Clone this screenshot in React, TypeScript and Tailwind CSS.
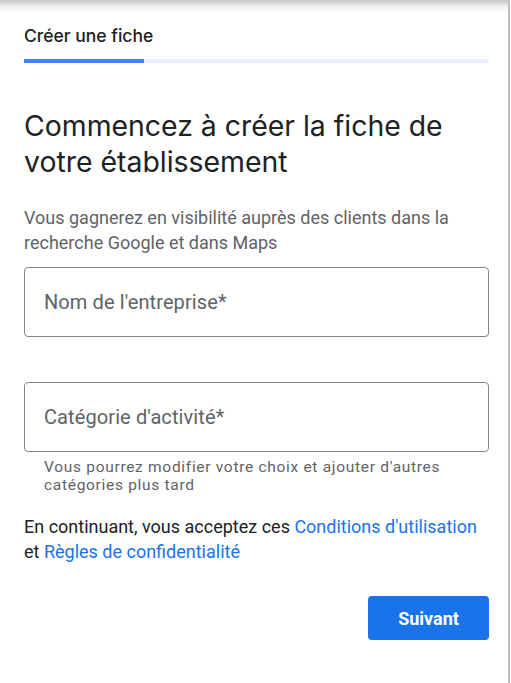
import React from "react";

export default function App() {
  return (
    <div className="w-[511px] h-[683px] bg-white flex overflow-hidden" style={{ fontFamily: "Roboto, 'Liberation Sans', sans-serif" }}>
      <div className="relative w-[508px] h-full bg-white">
        <div className="absolute top-0 left-0 right-0 h-[12px] bg-gradient-to-b from-[#c4c4c4] via-[#ececec] to-white" />
        <div className="relative ml-[24px] w-[465px] pt-[25px]">
          <div className="text-[17.5px] leading-[22px] text-[#202124] font-medium" style={{ fontFamily: "Inter, 'Open Sans', sans-serif" }}>
            Créer une fiche
          </div>
          <div className="mt-[12px] h-[4px] w-full bg-[#e8f0fe] flex">
            <div className="h-full w-[120px] bg-[#4285f4]" />
          </div>
          <h1 className="mt-[45px] text-[28.4px] leading-[36px] text-[#202124] font-normal" style={{ fontFamily: "Inter, 'Open Sans', sans-serif" }}>
            Commencez à créer la fiche de votre établissement
          </h1>
          <p className="mt-[25px] text-[18px] leading-[25px] text-[#5f6368]">
            Vous gagnerez en visibilité auprès des clients dans la recherche Google et dans Maps
          </p>
          <div className="mt-[12px] h-[70px] rounded-[4px] border border-[#80868b] flex items-center pl-[19px] text-[20px] tracking-[0.1px] text-[#5f6368]">
            Nom de l'entreprise*
          </div>
          <div className="mt-[45px] h-[70px] rounded-[4px] border border-[#80868b] flex items-center pl-[19px] text-[20px] tracking-[0.1px] text-[#5f6368]">
            Catégorie d'activité*
          </div>
          <p className="mt-[6px] pl-[20px] pr-[30px] text-[15.5px] leading-[18px] tracking-[0.7px] text-[#5f6368]">
            Vous pourrez modifier votre choix et ajouter d'autres catégories plus tard
          </p>
          <p className="mt-[20px] text-[18px] leading-[25px] text-[#202124]">
            En continuant, vous acceptez ces <span className="text-[#1a73e8]">Conditions d'utilisation</span> et <span className="text-[#1a73e8]">Règles de confidentialité</span>
          </p>
          <div className="mt-[32px] flex justify-end">
            <button className="w-[121px] h-[44px] rounded-[4px] bg-[#1a73e8] text-white text-[18px] font-bold">
              Suivant
            </button>
          </div>
        </div>
      </div>
      <div className="w-[2px] h-full bg-[#bdbdbd]" />
      <div className="w-[1px] h-full bg-white" />
    </div>
  );
}
